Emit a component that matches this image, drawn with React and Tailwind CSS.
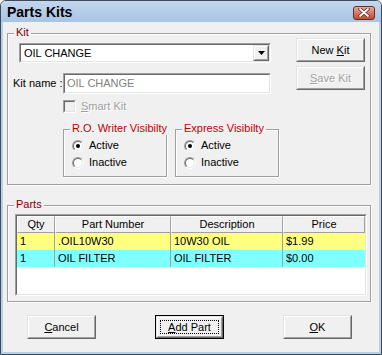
import React from 'react';

const cols = [
  { id: 'qty', label: 'Qty', w: 'w-[38px]' },
  { id: 'part', label: 'Part Number', w: 'w-[116px]' },
  { id: 'desc', label: 'Description', w: 'w-[112px]' },
  { id: 'price', label: 'Price', w: 'flex-1' },
];

const rows = [
  { qty: '1', part: '.OIL10W30', desc: '10W30 OIL', price: '$1.99', bg: 'bg-[#ffff80]' },
  { qty: '1', part: 'OIL FILTER', desc: 'OIL FILTER', price: '$0.00', bg: 'bg-[#80ffff]' },
];

function Group({ label, labelClass, className, children }) {
  return (
    <div className={`relative border border-[#a0a0a0] shadow-[inset_1px_1px_0_#fff,1px_1px_0_#fff] ${className}`}>
      <span className={`absolute -top-[8px] left-[6px] px-[2px] bg-[#f0f0f0] leading-[13px] whitespace-nowrap ${labelClass}`}>
        {label}
      </span>
      {children}
    </div>
  );
}

function Btn({ children, isDefault, disabled }) {
  return (
    <div className={`w-[69px] h-[24px] bg-[#f0f0f0] ${isDefault ? 'border border-black' : ''}`}>
      <div className="w-full h-full border border-t-[#e3e3e3] border-l-[#e3e3e3] border-r-[#696969] border-b-[#696969]">
        <div className="w-full h-full border border-t-white border-l-white border-r-[#a0a0a0] border-b-[#a0a0a0] flex items-center justify-center p-[2px]">
          <div
            className={`w-full h-full flex items-center justify-center ${
              isDefault ? 'outline-1 outline-dotted outline-black -outline-offset-1' : ''
            } ${disabled ? 'text-[#a0a0a0] [text-shadow:1px_1px_0_#fff]' : 'text-black'}`}
          >
            <span className="whitespace-pre">{children}</span>
          </div>
        </div>
      </div>
    </div>
  );
}

function Sunken({ className, innerClass, children }) {
  return (
    <div className={`border border-t-[#a0a0a0] border-l-[#a0a0a0] border-r-white border-b-white ${className}`}>
      <div className={`w-full h-full border border-t-[#696969] border-l-[#696969] border-r-[#e3e3e3] border-b-[#e3e3e3] ${innerClass}`}>
        {children}
      </div>
    </div>
  );
}

function Radio({ checked, label }) {
  return (
    <div className="flex items-center h-[17px] gap-[5px]">
      <span className="w-[12px] h-[12px] rounded-full border border-t-[#a0a0a0] border-l-[#a0a0a0] border-r-white border-b-white flex">
        <span className="w-full h-full rounded-full bg-white border border-t-[#696969] border-l-[#696969] border-r-[#e3e3e3] border-b-[#e3e3e3] flex items-center justify-center">
          {checked && <span className="w-[4px] h-[4px] rounded-full bg-black" />}
        </span>
      </span>
      <span>{label}</span>
    </div>
  );
}

function Visibility({ label }) {
  return (
    <Group label={label} labelClass="text-[#c00000]" className="w-[104px] h-[48px]">
      <div className="pt-[7px] pl-[8px]">
        <Radio checked label="Active" />
        <Radio label="Inactive" />
      </div>
    </Group>
  );
}

const U = ({ children }) => <span className="underline underline-offset-[1px]">{children}</span>;

export default function App() {
  return (
    <div className="w-[382px] h-[355px] bg-[#f0f0f0] font-['Liberation_Sans',Arial,sans-serif] text-[11px] leading-[13px] text-black">
      <div className="w-full h-full flex flex-col rounded-t-[6px] border border-[#3d4a58] overflow-hidden">
        {/* Title bar */}
        <div className="h-[21px] shrink-0 flex items-center bg-gradient-to-b from-[#c4d7ed] to-[#a8c4e4] pl-[6px] pr-[6px]">
          <span className="text-[14px] leading-[16px] font-bold">Parts Kits</span>
          <div className="ml-auto w-[22px] h-[14px] mt-[2px] rounded-[3px] border border-[#6b2c22] bg-gradient-to-b from-[#eaa897] via-[#d77a66] to-[#c24a34] flex items-center justify-center">
            <svg width="12" height="9" viewBox="0 0 12 9">
              <path d="M2 1 L10 8 M10 1 L2 8" stroke="#5a2a22" strokeWidth="3.4" strokeLinecap="round" />
              <path d="M2 1 L10 8 M10 1 L2 8" stroke="#fff" strokeWidth="1.8" strokeLinecap="round" />
            </svg>
          </div>
        </div>

        {/* Body */}
        <div className="flex-1 flex flex-col border-x-2 border-b-2 border-[#b7cfe9]">
          {/* Kit group */}
          <Group label="Kit" labelClass="text-[#800000]" className="ml-[4px] mt-[11px] w-[364px] h-[152px]">
            <div className="flex">
              <div className="w-[282px] pt-[9px]">
                <Sunken className="ml-[11px] w-[252px] h-[20px]" innerClass="flex items-stretch bg-white">
                  <span className="flex-1 pl-[3px] flex items-center">OIL CHANGE</span>
                  <div className="w-[16px] h-full bg-[#f0f0f0] border border-t-[#e3e3e3] border-l-[#e3e3e3] border-r-[#696969] border-b-[#696969]">
                    <div className="w-full h-full border border-t-white border-l-white border-r-[#a0a0a0] border-b-[#a0a0a0] flex items-center justify-center">
                      <svg width="7" height="4" viewBox="0 0 7 4">
                        <path d="M0 0 H7 L3.5 4 Z" fill="#000" />
                      </svg>
                    </div>
                  </div>
                </Sunken>

                <div className="flex items-center mt-[10px] pl-[5px]">
                  <span className="w-[50px] whitespace-nowrap">Kit name :</span>
                  <Sunken className="w-[208px] h-[21px]" innerClass="bg-white flex items-center pl-[2px] text-[#7f7f7f]">
                    OIL CHANGE
                  </Sunken>
                </div>

                <div className="flex items-center mt-[6px] pl-[55px] gap-[5px] h-[13px]">
                  <Sunken className="w-[13px] h-[13px]" innerClass="bg-[#f0f0f0]" />
                  <span className="text-[#a0a0a0] [text-shadow:1px_1px_0_#fff]">
                    <U>S</U>mart Kit
                  </span>
                </div>

                <div className="flex mt-[16px] pl-[55px] gap-[8px]">
                  <Visibility label="R.O. Writer Visibilty" />
                  <Visibility label="Express Visibilty" />
                </div>
              </div>

              <div className="ml-auto pr-[5px] pt-[4px] flex flex-col gap-[4px]">
                <Btn>
                  New <U>K</U>it
                </Btn>
                <Btn disabled>
                  <U>S</U>ave Kit
                </Btn>
              </div>
            </div>
          </Group>

          {/* Parts group */}
          <Group label="Parts" labelClass="text-[#800000]" className="ml-[4px] mt-[20px] w-[364px] h-[97px]">
            <Sunken className="ml-[7px] mt-[8px] w-[352px] h-[82px]" innerClass="bg-white flex flex-col">
              <div className="flex h-[17px] bg-[#f0f0f0]">
                {cols.map((c) => (
                  <div
                    key={c.id}
                    className={`${c.w} border border-t-white border-l-white border-r-[#a0a0a0] border-b-[#a0a0a0] flex items-center justify-center`}
                  >
                    {c.label}
                  </div>
                ))}
              </div>
              {rows.map((r, i) => (
                <div key={i} className={`flex h-[17px] ${r.bg}`}>
                  {cols.map((c) => (
                    <div
                      key={c.id}
                      className={`${c.w} ${c.id !== 'price' ? 'border-r border-[#a0a0a0]' : ''} pl-[3px] flex items-center`}
                    >
                      {r[c.id]}
                    </div>
                  ))}
                </div>
              ))}
            </Sunken>
          </Group>

          {/* Bottom buttons */}
          <div className="flex mt-[13px] ml-[24px] gap-[59px]">
            <Btn>
              <U>C</U>ancel
            </Btn>
            <Btn isDefault>
              <U>A</U>dd Part
            </Btn>
            <Btn>
              <U>O</U>K
            </Btn>
          </div>
        </div>
      </div>
    </div>
  );
}
